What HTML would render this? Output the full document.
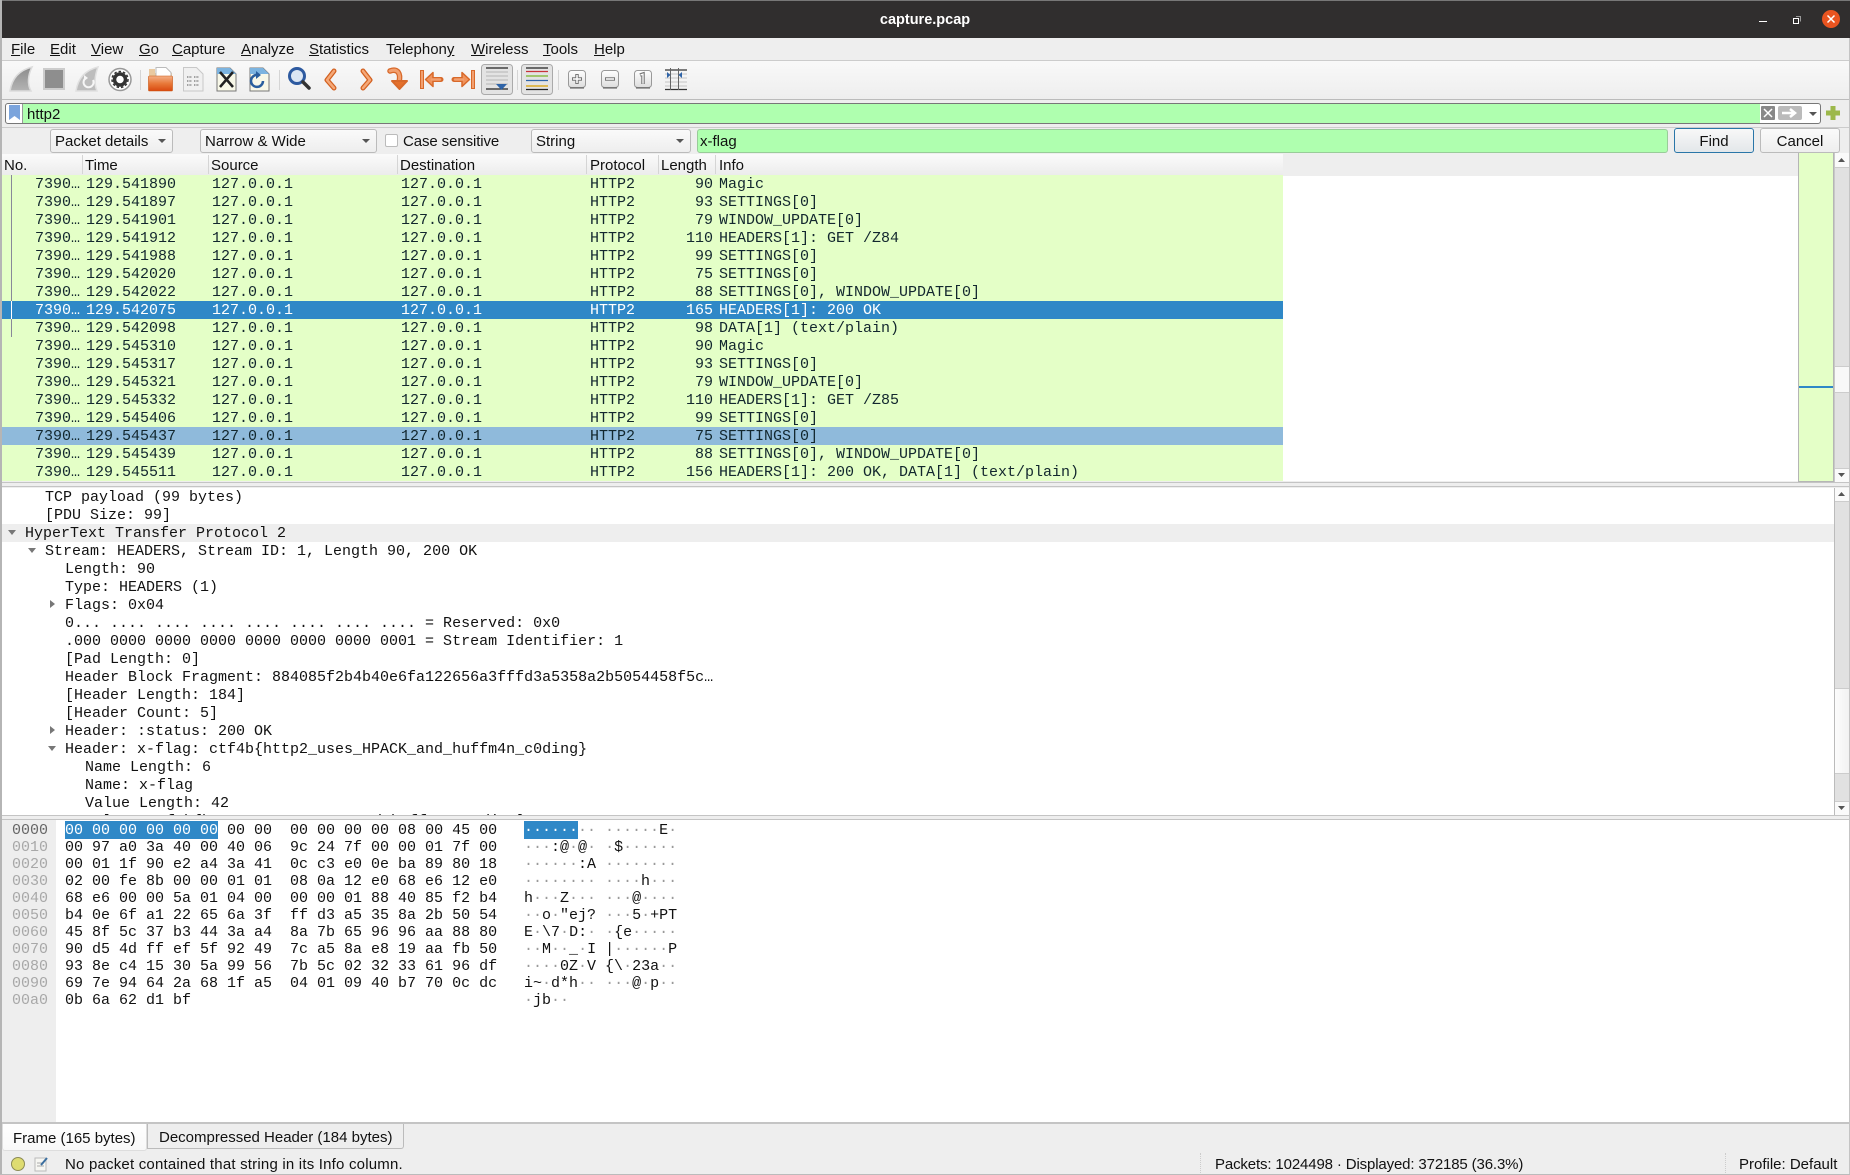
<!DOCTYPE html>
<html><head><meta charset="utf-8"><title>capture.pcap</title>
<style>
html,body{margin:0;padding:0;width:1850px;height:1175px;overflow:hidden;background:#eee}
body{position:relative;font:15px/18px "Liberation Sans",sans-serif;color:#111}
.a{position:absolute}
.t{position:absolute;white-space:pre;line-height:18px;margin-top:1px}
.box{position:absolute;box-sizing:border-box;border:1px solid #bbb;border-radius:3px;background:linear-gradient(#fafafa,#eee)}
.m{font-family:"Liberation Mono",monospace;font-size:15px}
.r{height:18px;position:relative;background:#e4ffc7;width:1281px;color:#12272e}
.r b{position:absolute;top:1px;font-weight:normal;white-space:pre}
.r b:nth-child(1){left:33px}
.r b:nth-child(2){left:84px}
.r b:nth-child(3){left:210px}
.r b:nth-child(4){left:399px}
.r b:nth-child(5){left:588px}
.r b:nth-child(6){right:570px}
.r b:nth-child(7){left:717px}
.sel{background:#2f88c7;color:#fff}
.sel2{background:#8fbadb}
#lst{position:absolute;left:2px;top:175px;width:1281px;height:306px;overflow:hidden;line-height:18px}
#det{position:absolute;left:2px;top:488px;width:1832px;height:327px;overflow:hidden;background:#fff;color:#111}
#det div{height:18px;line-height:20px;white-space:pre}
.hd{position:absolute;top:155px;height:21px;line-height:21px;font-size:15px;white-space:pre}
.sp{position:absolute;top:155px;height:19px;width:1px;background:#d5d5d5}
#hex{position:absolute;left:65px;top:822px;line-height:17px;white-space:pre;color:#111}
#hex span,#asc span{background:#2f88c7;color:#fff;padding-top:1px}
#asc{position:absolute;left:524px;top:822px;line-height:17px;white-space:pre;color:#111}
#asc i{font-style:normal;color:#9a9a9a}
#asc span i{color:#fff}
#off{position:absolute;left:2px;top:820px;width:54px;height:303px;background:#eee;box-sizing:border-box;padding:2px 0 0 10px;line-height:17px;color:#a8a8a8;white-space:pre}
.ar{position:absolute;width:0;height:0}
.dn{border-left:4px solid transparent;border-right:4px solid transparent;border-top:5px solid #777}
.rt{border-top:4px solid transparent;border-bottom:4px solid transparent;border-left:5px solid #777}
.cb{position:absolute;width:0;height:0;border-left:4px solid transparent;border-right:4px solid transparent;border-top:4px solid #555;top:139px}
u{text-decoration:underline}
</style></head>
<body>
<!-- title bar -->
<div class="a" style="left:0;top:0;width:1850px;height:38px;background:#302e2e;border-top:1px solid #777;box-sizing:border-box"></div>
<div class="t" style="left:0;top:10px;width:1850px;text-align:center;color:#fff;font-weight:bold;font-size:14.5px">capture.pcap</div>
<!-- menu -->
<div class="a" style="left:0;top:38px;width:1850px;height:22px;background:#eee;border-bottom:1px solid #ccc"></div>
<div class="t" style="left:11px;top:40px"><u>F</u>ile</div>
<div class="t" style="left:50px;top:40px"><u>E</u>dit</div>
<div class="t" style="left:91px;top:40px"><u>V</u>iew</div>
<div class="t" style="left:139px;top:40px"><u>G</u>o</div>
<div class="t" style="left:172px;top:40px"><u>C</u>apture</div>
<div class="t" style="left:241px;top:40px"><u>A</u>nalyze</div>
<div class="t" style="left:309px;top:40px"><u>S</u>tatistics</div>
<div class="t" style="left:386px;top:40px">Telephon<u>y</u></div>
<div class="t" style="left:471px;top:40px"><u>W</u>ireless</div>
<div class="t" style="left:543px;top:40px"><u>T</u>ools</div>
<div class="t" style="left:594px;top:40px"><u>H</u>elp</div>
<!-- toolbar -->
<div class="a" style="left:0;top:61px;width:1850px;height:38px;background:linear-gradient(#f9f9f9,#eee);border-bottom:1px solid #bbb"></div>
<!-- filter row -->
<div class="a" style="left:5px;top:103px;width:1816px;height:21px;box-sizing:border-box;border:1px solid #777;border-radius:3px;background:#fff"></div>
<div class="a" style="left:23px;top:104px;width:1737px;height:19px;background:#afffaf"></div>
<div class="t" style="left:27px;top:105px;font-size:15px">http2</div>
<div class="a" style="left:0;top:127px;width:1850px;height:1px;background:#ccc"></div>
<!-- find bar -->
<div class="box" style="left:50px;top:129px;width:123px;height:24px"></div>
<div class="t" style="left:55px;top:132px">Packet details</div><div class="cb" style="left:158px"></div>
<div class="box" style="left:200px;top:129px;width:177px;height:24px"></div>
<div class="t" style="left:205px;top:132px">Narrow &amp; Wide</div><div class="cb" style="left:362px"></div>
<div class="a" style="left:385px;top:134px;width:13px;height:13px;background:#fff;border:1px solid #bbb;border-radius:2px;box-sizing:border-box"></div>
<div class="t" style="left:403px;top:132px;letter-spacing:-.1px">Case sensitive</div>
<div class="box" style="left:531px;top:129px;width:160px;height:24px"></div>
<div class="t" style="left:536px;top:132px">String</div><div class="cb" style="left:676px"></div>
<div class="a" style="left:697px;top:129px;width:971px;height:24px;box-sizing:border-box;background:#afffaf;border:1px solid #9c9;border-radius:3px"></div>
<div class="t" style="left:700px;top:132px">x-flag</div>
<div class="box" style="left:1674px;top:128px;width:80px;height:25px;border-color:#2a76a8;background:linear-gradient(#f8f8f8,#e3e7ea)"></div>
<div class="t" style="left:1674px;top:132px;width:80px;text-align:center">Find</div>
<div class="box" style="left:1760px;top:128px;width:80px;height:25px"></div>
<div class="t" style="left:1760px;top:132px;width:80px;text-align:center">Cancel</div>
<!-- packet list -->
<div class="a" style="left:2px;top:154px;width:1796px;height:22px;background:#eee"></div>
<div class="a" style="left:2px;top:154px;width:1281px;height:21px;background:linear-gradient(#fbfbfb,#ececec);border-bottom:1px solid #bbb"></div>
<div class="a" style="left:2px;top:176px;width:1832px;height:305px;background:#fff"></div>
<div class="hd" style="left:4px">No.</div><div class="sp" style="left:82px"></div>
<div class="hd" style="left:85px">Time</div><div class="sp" style="left:208px"></div>
<div class="hd" style="left:211px">Source</div><div class="sp" style="left:397px"></div>
<div class="hd" style="left:400px">Destination</div><div class="sp" style="left:586px"></div>
<div class="hd" style="left:590px">Protocol</div><div class="sp" style="left:658px"></div>
<div class="hd" style="left:661px">Length</div><div class="sp" style="left:715px"></div>
<div class="hd" style="left:719px">Info</div>
<div id="lst" class="m">
<div class="r"><b>7390…</b><b>129.541890</b><b>127.0.0.1</b><b>127.0.0.1</b><b>HTTP2</b><b>90</b><b>Magic</b></div>
<div class="r"><b>7390…</b><b>129.541897</b><b>127.0.0.1</b><b>127.0.0.1</b><b>HTTP2</b><b>93</b><b>SETTINGS[0]</b></div>
<div class="r"><b>7390…</b><b>129.541901</b><b>127.0.0.1</b><b>127.0.0.1</b><b>HTTP2</b><b>79</b><b>WINDOW_UPDATE[0]</b></div>
<div class="r"><b>7390…</b><b>129.541912</b><b>127.0.0.1</b><b>127.0.0.1</b><b>HTTP2</b><b>110</b><b>HEADERS[1]: GET /Z84</b></div>
<div class="r"><b>7390…</b><b>129.541988</b><b>127.0.0.1</b><b>127.0.0.1</b><b>HTTP2</b><b>99</b><b>SETTINGS[0]</b></div>
<div class="r"><b>7390…</b><b>129.542020</b><b>127.0.0.1</b><b>127.0.0.1</b><b>HTTP2</b><b>75</b><b>SETTINGS[0]</b></div>
<div class="r"><b>7390…</b><b>129.542022</b><b>127.0.0.1</b><b>127.0.0.1</b><b>HTTP2</b><b>88</b><b>SETTINGS[0], WINDOW_UPDATE[0]</b></div>
<div class="r sel"><b>7390…</b><b>129.542075</b><b>127.0.0.1</b><b>127.0.0.1</b><b>HTTP2</b><b>165</b><b>HEADERS[1]: 200 OK</b></div>
<div class="r"><b>7390…</b><b>129.542098</b><b>127.0.0.1</b><b>127.0.0.1</b><b>HTTP2</b><b>98</b><b>DATA[1] (text/plain)</b></div>
<div class="r"><b>7390…</b><b>129.545310</b><b>127.0.0.1</b><b>127.0.0.1</b><b>HTTP2</b><b>90</b><b>Magic</b></div>
<div class="r"><b>7390…</b><b>129.545317</b><b>127.0.0.1</b><b>127.0.0.1</b><b>HTTP2</b><b>93</b><b>SETTINGS[0]</b></div>
<div class="r"><b>7390…</b><b>129.545321</b><b>127.0.0.1</b><b>127.0.0.1</b><b>HTTP2</b><b>79</b><b>WINDOW_UPDATE[0]</b></div>
<div class="r"><b>7390…</b><b>129.545332</b><b>127.0.0.1</b><b>127.0.0.1</b><b>HTTP2</b><b>110</b><b>HEADERS[1]: GET /Z85</b></div>
<div class="r"><b>7390…</b><b>129.545406</b><b>127.0.0.1</b><b>127.0.0.1</b><b>HTTP2</b><b>99</b><b>SETTINGS[0]</b></div>
<div class="r sel2"><b>7390…</b><b>129.545437</b><b>127.0.0.1</b><b>127.0.0.1</b><b>HTTP2</b><b>75</b><b>SETTINGS[0]</b></div>
<div class="r"><b>7390…</b><b>129.545439</b><b>127.0.0.1</b><b>127.0.0.1</b><b>HTTP2</b><b>88</b><b>SETTINGS[0], WINDOW_UPDATE[0]</b></div>
<div class="r"><b>7390…</b><b>129.545511</b><b>127.0.0.1</b><b>127.0.0.1</b><b>HTTP2</b><b>156</b><b>HEADERS[1]: 200 OK, DATA[1] (text/plain)</b></div>
</div>
<div class="a" style="left:11px;top:175px;width:1px;height:126px;background:#889"></div>
<div class="a" style="left:11px;top:301px;width:1px;height:18px;background:#fff"></div>
<div class="a" style="left:11px;top:319px;width:1px;height:18px;background:#889"></div>
<!-- minimap -->
<div class="a" style="left:1798px;top:153px;width:36px;height:329px;box-sizing:border-box;background:#e4ffc7;border:1px solid #b5b5b5;border-width:0 1px 1px 1px"></div>
<div class="a" style="left:1799px;top:386px;width:34px;height:2px;background:#2f88c7"></div>
<!-- list scrollbar -->
<div class="a" style="left:1834px;top:153px;width:15px;height:329px;background:#e1e1e1;border-left:1px solid #c8c8c8;box-sizing:border-box"></div>
<div class="a" style="left:1835px;top:153px;width:14px;height:15px;background:#fafafa;border-bottom:1px solid #ccc;box-sizing:border-box"></div>
<div class="a" style="left:1835px;top:468px;width:14px;height:14px;background:#fafafa;border-top:1px solid #ccc;box-sizing:border-box"></div>
<div class="a" style="left:1835px;top:366px;width:14px;height:27px;background:#f8f8f8;border:1px solid #ccc;border-width:1px 0;box-sizing:border-box"></div>
<!-- sep -->
<div class="a" style="left:0;top:482px;width:1850px;height:5px;background:#eee;border-top:1px solid #c4c4c4;border-bottom:1px solid #c4c4c4;box-sizing:border-box"></div>
<!-- details -->
<div id="det" class="m">
<div style="padding-left:43px">TCP payload (99 bytes)</div>
<div style="padding-left:43px">[PDU Size: 99]</div>
<div style="padding-left:23px;background:#eee">HyperText Transfer Protocol 2</div>
<div style="padding-left:43px">Stream: HEADERS, Stream ID: 1, Length 90, 200 OK</div>
<div style="padding-left:63px">Length: 90</div>
<div style="padding-left:63px">Type: HEADERS (1)</div>
<div style="padding-left:63px">Flags: 0x04</div>
<div style="padding-left:63px">0... .... .... .... .... .... .... .... = Reserved: 0x0</div>
<div style="padding-left:63px">.000 0000 0000 0000 0000 0000 0000 0001 = Stream Identifier: 1</div>
<div style="padding-left:63px">[Pad Length: 0]</div>
<div style="padding-left:63px">Header Block Fragment: 884085f2b4b40e6fa122656a3fffd3a5358a2b5054458f5c…</div>
<div style="padding-left:63px">[Header Length: 184]</div>
<div style="padding-left:63px">[Header Count: 5]</div>
<div style="padding-left:63px">Header: :status: 200 OK</div>
<div style="padding-left:63px">Header: x-flag: ctf4b{http2_uses_HPACK_and_huffm4n_c0ding}</div>
<div style="padding-left:83px">Name Length: 6</div>
<div style="padding-left:83px">Name: x-flag</div>
<div style="padding-left:83px">Value Length: 42</div>
<div style="padding-left:83px">Value: ctf4b{http2_uses_HPACK_and_huffm4n_c0ding}</div>
</div>
<div class="ar dn" style="left:8px;top:530px"></div>
<div class="ar dn" style="left:28px;top:548px"></div>
<div class="ar rt" style="left:50px;top:600px"></div>
<div class="ar rt" style="left:50px;top:726px"></div>
<div class="ar dn" style="left:48px;top:746px"></div>
<!-- details scrollbar -->
<div class="a" style="left:1834px;top:488px;width:15px;height:327px;background:#e1e1e1;border-left:1px solid #bbb;box-sizing:border-box"></div>
<div class="a" style="left:1835px;top:488px;width:14px;height:14px;background:#fafafa;border-bottom:1px solid #ccc;box-sizing:border-box"></div>
<div class="a" style="left:1835px;top:688px;width:14px;height:86px;background:linear-gradient(90deg,#fcfcfc,#f2f2f2);border:1px solid #ccc;border-width:1px 0;box-sizing:border-box"></div>
<div class="a" style="left:1835px;top:801px;width:14px;height:14px;background:#fafafa;border-top:1px solid #ccc;box-sizing:border-box"></div>
<!-- sep -->
<div class="a" style="left:0;top:815px;width:1850px;height:5px;background:#eee;border-top:1px solid #c4c4c4;border-bottom:1px solid #c4c4c4;box-sizing:border-box"></div>
<!-- hex pane -->
<div class="a" style="left:2px;top:820px;width:1847px;height:303px;background:#fff"></div>
<div id="off" class="m"><span style="color:#666">0000</span>
0010
0020
0030
0040
0050
0060
0070
0080
0090
00a0</div>
<div id="hex" class="m"><span>00 00 00 00 00 00</span> 00 00  00 00 00 00 08 00 45 00
00 97 a0 3a 40 00 40 06  9c 24 7f 00 00 01 7f 00
00 01 1f 90 e2 a4 3a 41  0c c3 e0 0e ba 89 80 18
02 00 fe 8b 00 00 01 01  08 0a 12 e0 68 e6 12 e0
68 e6 00 00 5a 01 04 00  00 00 01 88 40 85 f2 b4
b4 0e 6f a1 22 65 6a 3f  ff d3 a5 35 8a 2b 50 54
45 8f 5c 37 b3 44 3a a4  8a 7b 65 96 96 aa 88 80
90 d5 4d ff ef 5f 92 49  7c a5 8a e8 19 aa fb 50
93 8e c4 15 30 5a 99 56  7b 5c 02 32 33 61 96 df
69 7e 94 64 2a 68 1f a5  04 01 09 40 b7 70 0c dc
0b 6a 62 d1 bf</div>
<div id="asc" class="m"><span><i>······</i></span><i>··</i> <i>······</i>E<i>·</i>
<i>···</i>:@<i>·</i>@<i>·</i> <i>·</i>$<i>······</i>
<i>······</i>:A <i>········</i>
<i>········</i> <i>····</i>h<i>···</i>
h<i>···</i>Z<i>···</i> <i>···</i>@<i>····</i>
<i>··</i>o<i>·</i>"ej? <i>···</i>5<i>·</i>+PT
E<i>·</i>\7<i>·</i>D:<i>·</i> <i>·</i>{e<i>·····</i>
<i>··</i>M<i>··</i>_<i>·</i>I |<i>······</i>P
<i>····</i>0Z<i>·</i>V {\<i>·</i>23a<i>··</i>
i~<i>·</i>d*h<i>··</i> <i>···</i>@<i>·</i>p<i>··</i>
<i>·</i>jb<i>··</i></div>
<!-- tabs -->
<div class="a" style="left:0;top:1122px;width:1850px;height:2px;background:#c4c4c4"></div>
<div class="a" style="left:147px;top:1124px;width:257px;height:25px;background:#eee;border:1px solid #bbb;border-radius:0 0 3px 0;border-top:0;box-sizing:border-box"></div>
<div class="a" style="left:2px;top:1124px;width:145px;height:27px;background:linear-gradient(#fff,#f8f8f8);border:1px solid #ddd;border-top:0;border-radius:0 0 3px 3px;box-sizing:border-box"></div>
<div class="t" style="left:13px;top:1129px;font-size:15px">Frame (165 bytes)</div>
<div class="t" style="left:159px;top:1128px;font-size:15px">Decompressed Header (184 bytes)</div>
<!-- status -->
<div class="t" style="left:65px;top:1155px;font-size:15px;letter-spacing:.2px">No packet contained that string in its Info column.</div>
<div class="a" style="left:1200px;top:1153px;height:20px;border-left:1px dotted #ccc"></div>
<div class="t" style="left:1215px;top:1155px;font-size:15px;letter-spacing:-.14px">Packets: 1024498 · Displayed: 372185 (36.3%)</div>
<div class="a" style="left:1725px;top:1153px;height:20px;border-left:1px dotted #ccc"></div>
<div class="t" style="left:1739px;top:1155px;font-size:15px">Profile: Default</div>
<div class="a" style="left:0;top:0;width:2px;height:1175px;background:#b5b5b5"></div>
<div class="a" style="left:1849px;top:38px;width:1px;height:1137px;background:#c4c4c4"></div>
<div class="a" style="left:0;top:1174px;width:1850px;height:1px;background:#bbb"></div>
<!-- icons -->
<svg class="a" style="left:0;top:0" width="1850" height="1175" viewBox="0 0 1850 1175" xmlns="http://www.w3.org/2000/svg">
<defs>
<linearGradient id="g" x1="0" y1="0" x2="0" y2="1"><stop offset="0" stop-color="#8c8c8c"/><stop offset="1" stop-color="#b4b4b4"/></linearGradient>
<linearGradient id="o" x1="0" y1="0" x2="0" y2="1"><stop offset="0" stop-color="#f4b088"/><stop offset=".5" stop-color="#e8793a"/><stop offset="1" stop-color="#d9480f"/></linearGradient>
<linearGradient id="b" x1="0" y1="0" x2="0" y2="1"><stop offset="0" stop-color="#fff"/><stop offset="1" stop-color="#ddd"/></linearGradient>
</defs>
<!-- window controls -->
<rect x="1759" y="21" width="8" height="1" fill="#fff"/>
<rect x="1793.5" y="18.5" width="5" height="5" fill="none" stroke="#fff"/>
<path d="M1796 16.5h4.5v5" fill="none" stroke="#999"/>
<circle cx="1831" cy="19" r="9" fill="#e95420"/>
<path d="M1827.5 15.5l7 7m0-7l-7 7" stroke="#fff" stroke-width="1.5"/>
<!-- fin -->
<path d="M10 91C12 78 20 70 32 67C28 75 27 84 31 91Z" fill="url(#g)" stroke="#dcdcdc" stroke-width="1.5"/>
<!-- stop -->
<rect x="44" y="69" width="20" height="20" fill="#8e8e8e" stroke="#ccc" stroke-width="2"/>
<!-- restart -->
<path d="M76 91C78 78 86 70 98 67C95 75 94 84 97 91Z" fill="#bdbdbd" stroke="#e0e0e0" stroke-width="1.5"/>
<path d="M93 80a5 5 0 1 1-7-2" fill="none" stroke="#f6f6f6" stroke-width="2"/>
<path d="M84 75l4 3-4 3z" fill="#f6f6f6"/>
<!-- gear -->
<circle cx="120" cy="79.500" r="11" fill="#fff" stroke="#999" stroke-width="1.500"/>
<circle cx="120" cy="79.500" r="5.500" fill="none" stroke="#333" stroke-width="3.500"/>
<circle cx="120" cy="79.500" r="8" fill="none" stroke="#333" stroke-width="1.500" stroke-dasharray="2.500 2"/>
<!-- sep -->
<rect x="140" y="70" width="1" height="20" fill="#d5d5d5"/>
<rect x="279" y="70" width="1" height="20" fill="#d5d5d5"/>
<rect x="517" y="70" width="1" height="20" fill="#d5d5d5"/>
<rect x="558" y="70" width="1" height="20" fill="#d5d5d5"/>
<!-- open -->
<path d="M149 69h6v4h17v5h-23z" fill="#e9c9a0"/>
<path d="M156 67.500h10l5 5v8h-15z" fill="#fff" stroke="#bbb"/>
<rect x="148.500" y="76" width="24" height="15" rx="1" fill="url(#o)" stroke="#c9540f" stroke-width=".6"/>
<!-- file -->
<path d="M183.500 67.500h13l6.500 6.500v17h-19.500z" fill="#f0f0f0" stroke="#c8c8c8"/>
<path d="M187 77h5M194 77h5M187 81h5M194 81h5M187 85h5M194 85h5" stroke="#a0a0a0" stroke-width="2" stroke-dasharray="1 .6"/>
<!-- close -->
<path d="M217 68h13l6 6v17h-19z" fill="#f8f8e8" stroke="#777"/>
<path d="M217 68h13l6 6h-19z" fill="#7cb4e0"/>
<path d="M220 72l13 15m0-15l-13 15" stroke="#222" stroke-width="2.500"/>
<!-- reload -->
<path d="M250 68h13l6 6v17h-19z" fill="#f8f8e8" stroke="#777"/>
<path d="M250 68h13l6 6h-19z" fill="#7cb4e0"/>
<path d="M263 81a6 6 0 1 1-5-6" fill="none" stroke="#2a5f9e" stroke-width="2.500"/>
<path d="M256 71l5 4-5 4z" fill="#2a5f9e"/>
<!-- search -->
<circle cx="297" cy="76" r="7.500" fill="#dbe6f3" stroke="#2d5aa0" stroke-width="3"/>
<path d="M303 82l6 6" stroke="#333" stroke-width="3.500" stroke-linecap="round"/>
<!-- back/forward -->
<path d="M334 71l-7 9 7 8" fill="none" stroke="#d2601f" stroke-width="5" stroke-linecap="round" stroke-linejoin="round"/>
<path d="M334 71l-7 9 7 8" fill="none" stroke="#f5a878" stroke-width="2.500" stroke-linecap="round" stroke-linejoin="round"/>
<path d="M363 71l7 9-7 8" fill="none" stroke="#d2601f" stroke-width="5" stroke-linecap="round" stroke-linejoin="round"/>
<path d="M363 71l7 9-7 8" fill="none" stroke="#f5a878" stroke-width="2.500" stroke-linecap="round" stroke-linejoin="round"/>
<!-- jump -->
<path d="M390 71c8-3 11 3 9 11" fill="none" stroke="#d8692a" stroke-width="5.500" stroke-linecap="round"/>
<path d="M390 71c8-3 11 3 9 11" fill="none" stroke="#f2a070" stroke-width="3" stroke-linecap="round"/>
<path d="M392 81h15l-7.500 8z" fill="#e4702c" stroke="#d8692a" stroke-width="2" stroke-linejoin="round"/>
<!-- first -->
<rect x="420.500" y="70.500" width="3" height="18" fill="#f2a070" stroke="#d8692a"/>
<path d="M432 79.500h9" stroke="#d8692a" stroke-width="5" stroke-linecap="round"/>
<path d="M433 72.500l-7.500 7 7.500 7z" fill="#f0935c" stroke="#d8692a" stroke-width="1.500" stroke-linejoin="round"/>
<path d="M432 79.500h8" stroke="#f2a070" stroke-width="2.500" stroke-linecap="round"/>
<!-- last -->
<rect x="471.500" y="70.500" width="3" height="18" fill="#f2a070" stroke="#d8692a"/>
<path d="M454 79.500h9" stroke="#d8692a" stroke-width="5" stroke-linecap="round"/>
<path d="M462 72.500l7.500 7-7.500 7z" fill="#f0935c" stroke="#d8692a" stroke-width="1.500" stroke-linejoin="round"/>
<path d="M455 79.500h8" stroke="#f2a070" stroke-width="2.500" stroke-linecap="round"/>
<!-- autoscroll -->
<rect x="481.500" y="64.500" width="31" height="30" rx="3" fill="#e3e3e3" stroke="#aaa"/>
<path d="M486 68h22M486 89h22" stroke="#222" stroke-width="1.200"/>
<path d="M486 72h22M486 76h22M486 80h22M486 84h22" stroke="#b5b5b5" stroke-width="1"/>
<path d="M496 84h11l-5.500 6z" fill="#2f64a8"/>
<!-- colorize -->
<rect x="521.500" y="64.500" width="31" height="30" rx="3" fill="#e3e3e3" stroke="#aaa"/>
<path d="M526 68h22" stroke="#222" stroke-width="1.200"/>
<path d="M526 71.500h22" stroke="#c8323a" stroke-width="1.200"/>
<path d="M526 76h22" stroke="#7ab52a" stroke-width="1.200"/>
<path d="M526 80.500h22" stroke="#2f64a8" stroke-width="1.200"/>
<path d="M526 86h22" stroke="#d9a000" stroke-width="1.200"/>
<path d="M526 89.500h22" stroke="#222" stroke-width="1.200"/>
<!-- zoom buttons -->
<rect x="568.500" y="70.500" width="17" height="17" rx="3" fill="url(#b)" stroke="#999"/><path d="M570 88h14" stroke="#555"/>
<path d="M577 74v10M572 79h10" stroke="#777" stroke-width="3.500"/><path d="M577 75v8M573 79h8" stroke="#fff" stroke-width="1.500"/>
<rect x="601.500" y="70.500" width="17" height="17" rx="3" fill="url(#b)" stroke="#999"/><path d="M603 88h14" stroke="#555"/>
<path d="M605 79h10" stroke="#777" stroke-width="3.500"/><path d="M606 79h8" stroke="#fff" stroke-width="1.500"/>
<rect x="634.500" y="70.500" width="17" height="17" rx="3" fill="url(#b)" stroke="#999"/><path d="M636 88h14" stroke="#555"/>
<path d="M640 75l3-1v10" fill="none" stroke="#777" stroke-width="3.500"/><path d="M640.500 75l2.500-.8v9.500" fill="none" stroke="#fff" stroke-width="1.300"/>
<!-- resize -->
<path d="M665 70h22M665 89.500h22" stroke="#333" stroke-width="1.200"/>
<path d="M665 74h22M665 78h22M665 82h22M665 86h22" stroke="#c4c4c4" stroke-width="1"/>
<path d="M670.500 68v22M678.500 68v22" stroke="#666" stroke-width="1"/>
<path d="M667 72l3.500 3-3.500 3zM682 72l-3.500 3 3.500 3z" fill="#2f64a8"/>
<!-- bookmark -->
<path d="M9 105h11v15l-5.500-4-5.500 4z" fill="#7ba4dc"/>
<path d="M22.500 104v19" stroke="#999" stroke-width="1"/>
<!-- filter buttons -->
<rect x="1761" y="106" width="14" height="14" rx="1" fill="#888"/>
<path d="M1764 109l8 8m0-8l-8 8" stroke="#fff" stroke-width="1.500"/>
<rect x="1778" y="106" width="24" height="14" rx="2" fill="#bbb"/>
<path d="M1782 113h12m-4-4l5 4-5 4" fill="none" stroke="#fff" stroke-width="2.500"/>
<path d="M1809 112h8l-4 4z" fill="#555"/>
<path d="M1833 106v14M1826 113h14" stroke="#9cb84a" stroke-width="5"/>
<!-- arrows scrollbar -->
<path d="M1838 162l3.500-4 3.500 4z" fill="#555"/><path d="M1838 473l3.500 4 3.500-4z" fill="#555"/>
<path d="M1838 496l3.500-4 3.500 4z" fill="#555"/><path d="M1838 806l3.500 4 3.500-4z" fill="#555"/>
<!-- status -->
<circle cx="18" cy="1164" r="6.500" fill="#dedc71" stroke="#8c8b55"/>
<rect x="35" y="1158" width="11" height="13" fill="#f6f6f2" stroke="#bbb"/>
<path d="M37 1163h7M37 1166h7" stroke="#aaa"/><path d="M41 1165l6-7" stroke="#3a6e9f" stroke-width="2"/>
</svg>
</body></html>
